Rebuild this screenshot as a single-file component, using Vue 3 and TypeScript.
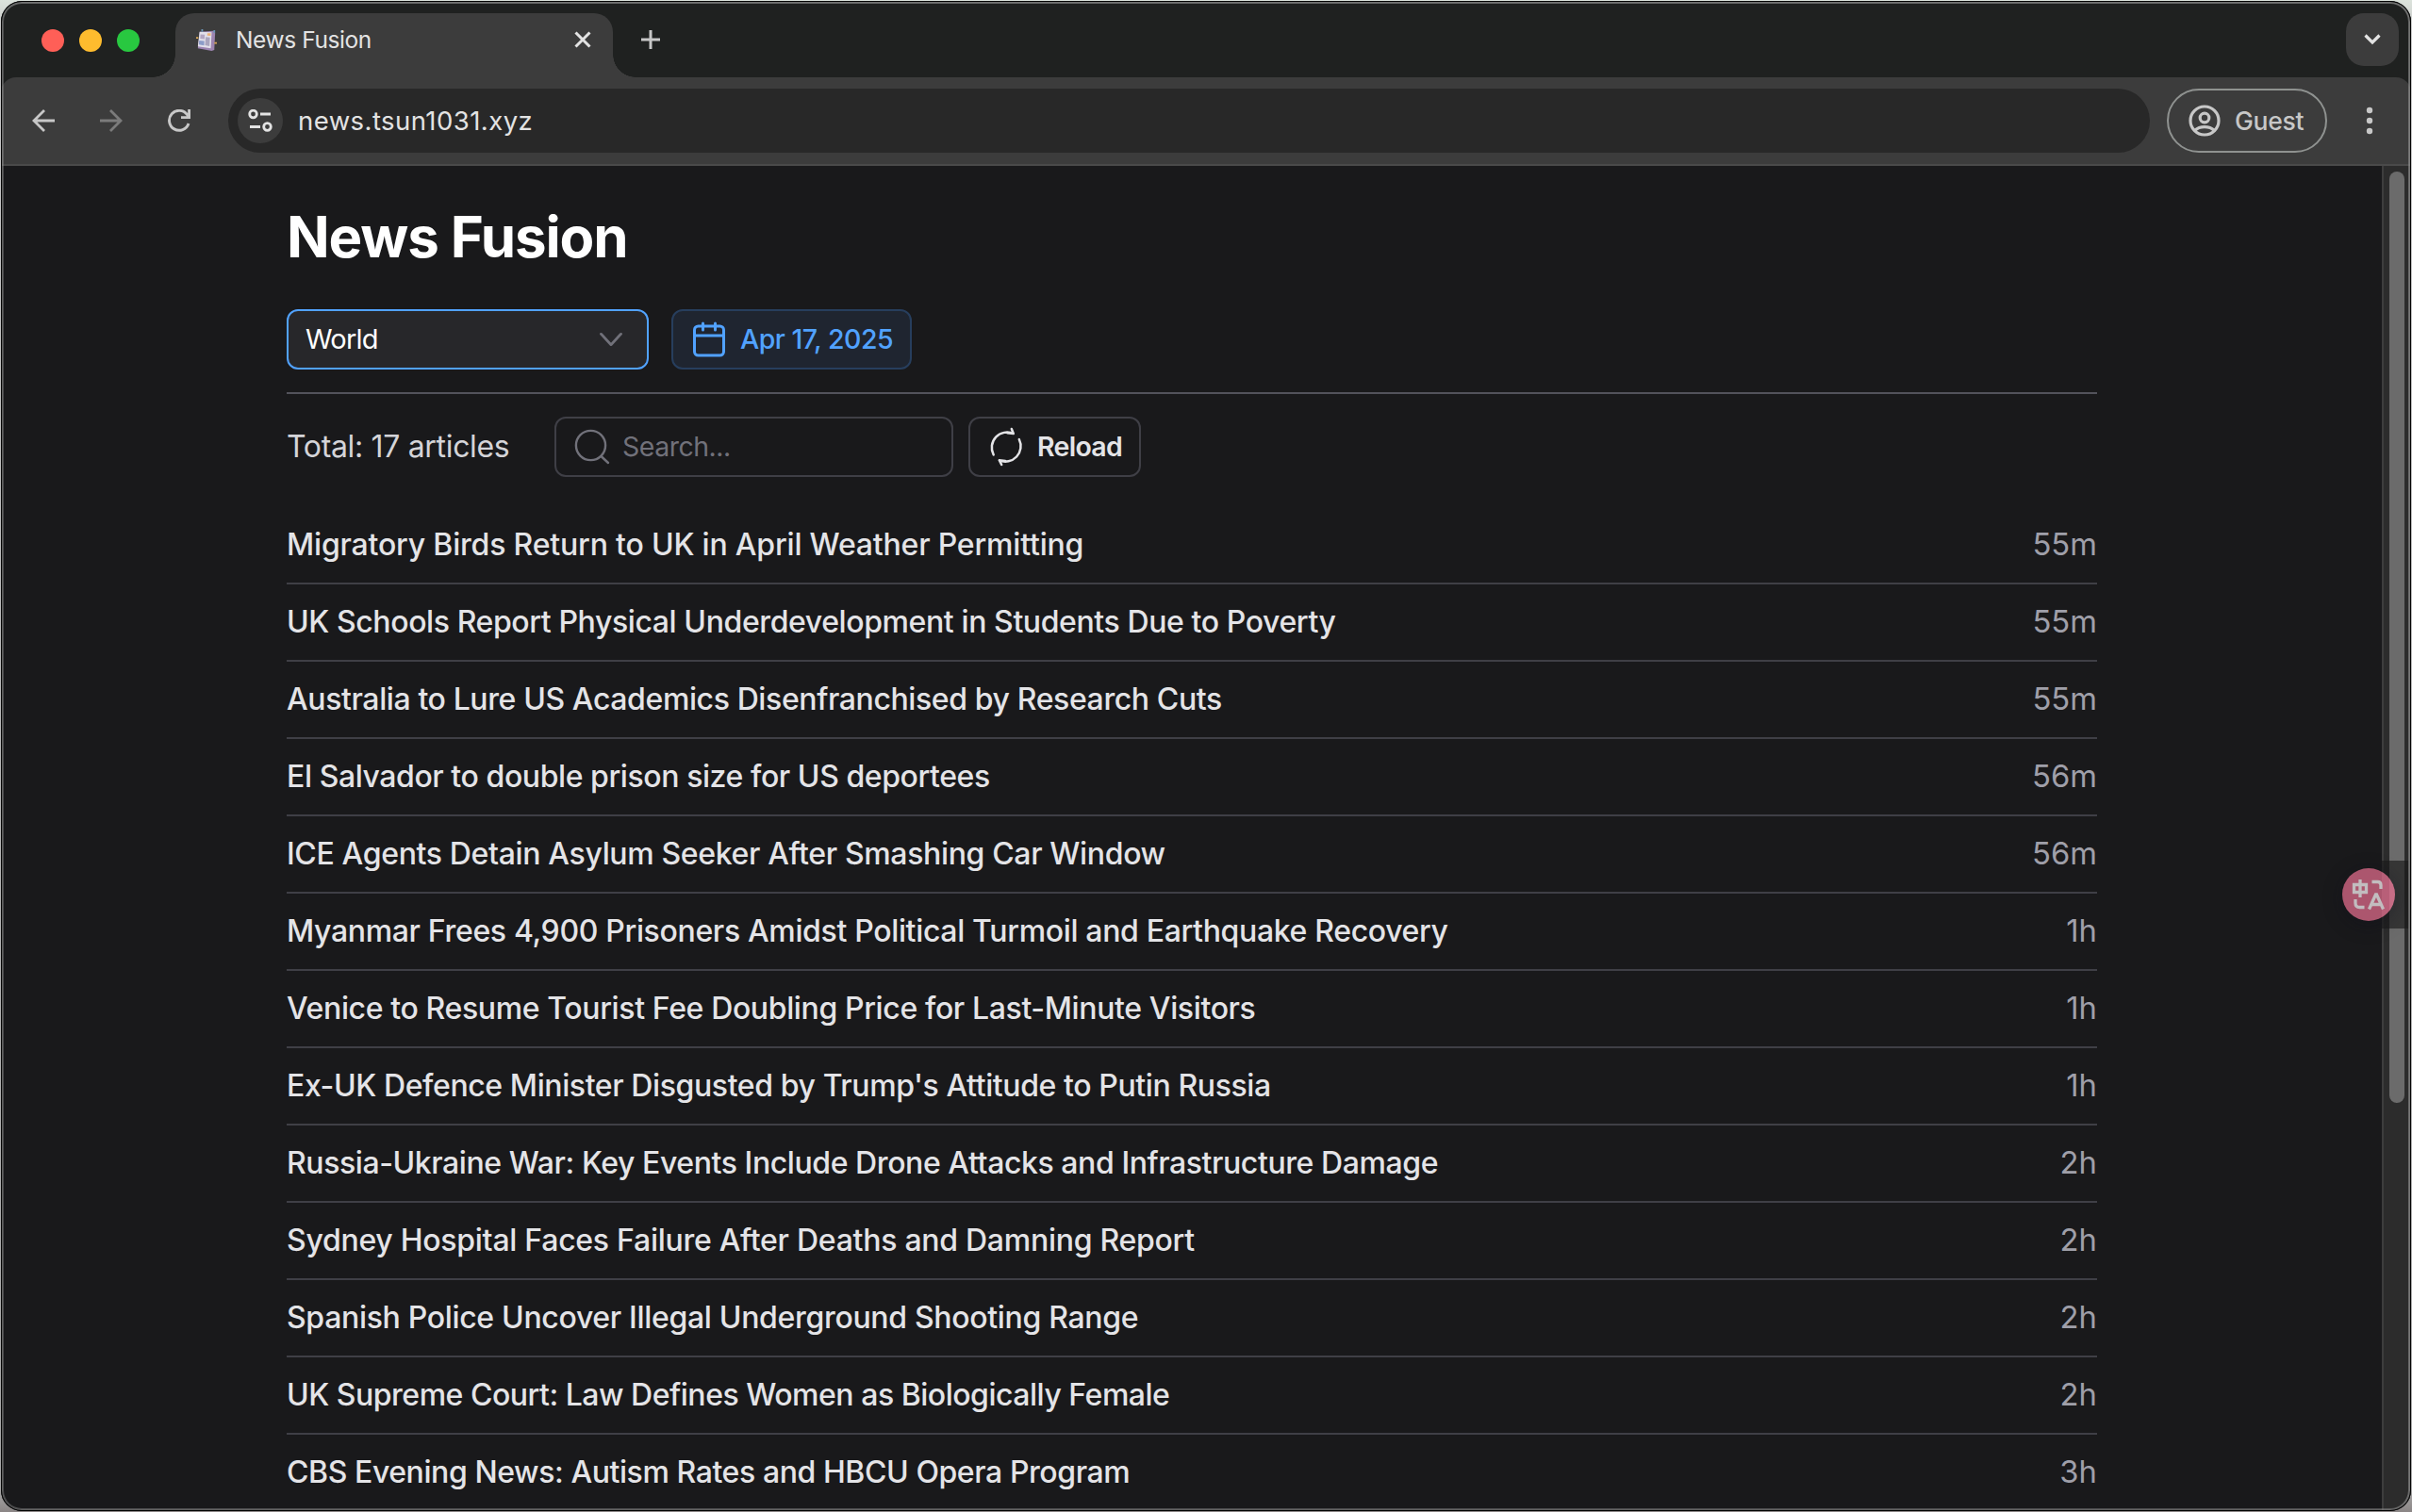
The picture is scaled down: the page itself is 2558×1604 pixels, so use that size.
<script setup lang="ts">
interface Article {
  title: string
  age: string
  tracking: number
}

const articles: Article[] = [
  { title: 'Migratory Birds Return to UK in April Weather Permitting', age: '55m', tracking: -0.19 },
  { title: 'UK Schools Report Physical Underdevelopment in Students Due to Poverty', age: '55m', tracking: -0.4 },
  { title: 'Australia to Lure US Academics Disenfranchised by Research Cuts', age: '55m', tracking: -0.39 },
  { title: 'El Salvador to double prison size for US deportees', age: '56m', tracking: -0.42 },
  { title: 'ICE Agents Detain Asylum Seeker After Smashing Car Window', age: '56m', tracking: -0.35 },
  { title: 'Myanmar Frees 4,900 Prisoners Amidst Political Turmoil and Earthquake Recovery', age: '1h', tracking: -0.34 },
  { title: 'Venice to Resume Tourist Fee Doubling Price for Last-Minute Visitors', age: '1h', tracking: -0.37 },
  { title: "Ex-UK Defence Minister Disgusted by Trump's Attitude to Putin Russia", age: '1h', tracking: -0.4 },
  { title: 'Russia-Ukraine War: Key Events Include Drone Attacks and Infrastructure Damage', age: '2h', tracking: -0.42 },
  { title: 'Sydney Hospital Faces Failure After Deaths and Damning Report', age: '2h', tracking: -0.27 },
  { title: 'Spanish Police Uncover Illegal Underground Shooting Range', age: '2h', tracking: -0.32 },
  { title: 'UK Supreme Court: Law Defines Women as Biologically Female', age: '2h', tracking: -0.48 },
  { title: 'CBS Evening News: Autism Rates and HBCU Opera Program', age: '3h', tracking: -0.42 },
]
</script>

<template>
  <div class="desktop">
    <div class="window">
      <header class="tabstrip">
        <div class="lights"><i class="red"></i><i class="yellow"></i><i class="green"></i></div>
        <div class="tab">
          <svg class="favicon" width="22" height="24" viewBox="0 0 24 26">
            <path d="M4 4l16-1 2 2-1 20-3 1-16-3z" fill="#9c84b0" />
            <path d="M4 4l14 .5-1 18.500-15-2z" fill="#e2dfea" />
            <path d="M5 7l5 .4-.3 5-5-.5z" fill="#b3a6c2" />
            <path d="M3.500 14l6 .7-.3 5-6-1z" fill="#8c9cc8" />
            <path d="M11 10l5 .6-.6 10-5-1z" fill="#aaa5be" />
            <path d="M13 5.500l4 .2-.2 3-4-.3z" fill="#ecb376" />
            <path d="M7 1v3M21 2v3" stroke="#6d95b6" stroke-width="2" />
            <path d="M0 11h2.500M21 17h3" stroke="#d8a557" stroke-width="2" />
          </svg>
          <span class="tab-title">News Fusion</span>
          <svg class="tab-close" width="18" height="18" viewBox="0 0 18 18"><path d="M1.500 1.500l15 15M16.500 1.500l-15 15" stroke="#e3e3e3" stroke-width="3" /></svg>
        </div>
        <svg class="plus" width="20" height="20" viewBox="0 0 20 20"><path d="M10 0v20M0 10h20" stroke="#c7c7c7" stroke-width="3" /></svg>
        <div class="tab-search">
          <svg width="18" height="12" viewBox="0 0 18 12"><path d="M1.500 1.500L9 9l7.500-7.500" fill="none" stroke="#e3e3e3" stroke-width="3.200" /></svg>
        </div>
      </header>

      <div class="toolbar">
        <svg class="nav" width="24" height="24" viewBox="0 0 24 24"><path d="M24 12H2M13 1L2 12l11 11" fill="none" stroke="#c7c7c7" stroke-width="2.800" /></svg>
        <svg class="nav" width="24" height="24" viewBox="0 0 24 24"><path d="M0 12h22M11 1l11 11-11 11" fill="none" stroke="#7b7b7b" stroke-width="2.800" /></svg>
        <svg class="nav" width="24" height="24" viewBox="0 0 24 24"><path d="M22 15A10.500 10.500 0 1 1 20.500 5.600L22 8M22.600 0v8.600H14" fill="none" stroke="#c7c7c7" stroke-width="2.900" /></svg>
        <div class="omnibox">
          <span class="site-info">
            <svg width="26" height="24" viewBox="0 0 26 24">
              <g fill="none" stroke="#e3e3e3" stroke-width="2.800"><circle cx="5.500" cy="5" r="3.800" /><path d="M13 5h11M2 18.500h11" /><circle cx="20.500" cy="18.500" r="3.800" /></g>
            </svg>
          </span>
          <span class="url">news.tsun1031.xyz</span>
        </div>
        <div class="guest">
          <svg width="34" height="34" viewBox="0 0 34 34"><g fill="none" stroke="#c7c7c7" stroke-width="3.200"><circle cx="17" cy="17" r="15" /><circle cx="17" cy="14" r="4.800" /><path d="M6.500 27.500C12 22.400 22 22.400 27.500 27.500" /></g></svg>
          <span>Guest</span>
        </div>
        <svg class="dots" width="8" height="30" viewBox="0 0 8 30"><g fill="#c7c7c7"><circle cx="4" cy="4" r="3.200" /><circle cx="4" cy="15" r="3.200" /><circle cx="4" cy="26" r="3.200" /></g></svg>
      </div>

      <div class="viewport">
        <main class="page">
          <h1>News Fusion</h1>
          <div class="filters">
            <div class="select">
              <span>World</span>
              <svg width="24" height="18" viewBox="0 0 24 18"><path d="M1.500 1.500L12 16 22.500 1.500" transform="translate(0 2) scale(1 .8)" fill="none" stroke="#71717a" stroke-width="3" stroke-linecap="round" stroke-linejoin="round" /></svg>
            </div>
            <div class="date">
              <svg width="34" height="38" viewBox="0 0 34 38"><g fill="none" stroke="#51a2ff" stroke-width="3" stroke-linecap="round"><rect x="1.500" y="5" width="31" height="31" rx="4" /><path d="M2 15h30M10.500 2v7M23.500 2v7" /></g></svg>
              <span>Apr 17, 2025</span>
            </div>
          </div>
          <div class="tools">
            <span class="total">Total: 17 articles</span>
            <div class="search">
              <svg width="38" height="38" viewBox="0 0 38 38"><g fill="none" stroke="#71717a" stroke-width="2.400" stroke-linecap="round"><circle cx="17.500" cy="17.500" r="15.600" /><path d="M28.500 29l7.500 7" /></g></svg>
              <span>Search...</span>
            </div>
            <div class="reload">
              <svg width="36" height="42" viewBox="0 0 36 42"><g fill="none" stroke="#e4e4e7" stroke-width="2.500" stroke-linecap="round" stroke-linejoin="round"><path d="M4.700 29.500A16.300 16.300 0 0 1 25.800 7M23.800 2l2 5-6.500-.8" /><path d="M31.800 13A16.300 16.300 0 0 1 10.800 35.300M13.200 40l-2.400-4.700 6.500.7" /></g></svg>
              <span>Reload</span>
            </div>
          </div>
          <ul class="list">
            <li v-for="a in articles" :key="a.title">
              <span class="title" :style="{ letterSpacing: a.tracking + 'px' }">{{ a.title }}</span>
              <span class="age">{{ a.age }}</span>
            </li>
          </ul>
        </main>
        <div class="scrollbar"><div class="thumb"></div></div>
      </div>
      <div class="translate-strip"></div>
      <div class="translate">
        <svg width="36" height="34" viewBox="0 0 36 34"><g fill="none" stroke="#c2bdbf" stroke-width="3.300"><path d="M2.500 6.500h13v8h-13zM9 1v19M21.500 3.500h6q3.500 0 3.500 3.500v4M4 22v4q0 4.500 4.500 4.500h5M18.500 32.500L25.500 17h1l7 15.500M21.500 27.500h9.500" /></g></svg>
      </div>
      <div class="frame"></div>
    </div>
  </div>
</template>

<style>
body { margin: 0; overflow: hidden; background: #c4c6c4; }
</style>

<style scoped>
* { box-sizing: border-box; }
svg { display: block; flex: none; }
.desktop {
  width: 2558px; height: 1604px; padding: 1px; overflow: hidden;
  background: linear-gradient(#dce3dc 0, #c9c9c9 30px, #a9a9a9 1580px, #8b8585 100%);
  font-family: Inter, "Liberation Sans", sans-serif;
}
.window {
  position: relative; display: flex; flex-direction: column;
  width: 2556px; height: 1602px; border-radius: 22px; overflow: hidden; background: #1f2120;
}
.frame {
  position: absolute; inset: 0; border-radius: 22px; border: 1px solid #050505;
  box-shadow: inset 0 0 0 2px rgba(150, 150, 150, 0.4), inset 0 1px 0 1px rgba(150, 150, 150, 0.3), inset -1px 0 0 1px rgba(150, 150, 150, 0.3);
}
.tabstrip { display: flex; flex: none; height: 81px; padding: 13px 13px 0 43px; background: #1f2120; }
.lights { display: flex; gap: 16px; padding-top: 17px; width: 142px; }
.lights i { width: 24px; height: 24px; border-radius: 50%; }
.red { background: #ff5f57; }
.yellow { background: #febc2e; }
.green { background: #28c840; }
.tab {
  position: relative; display: flex; width: 464px; height: 68px; padding: 0 23px 12px 22px; align-items: center;
  border-radius: 20px 20px 0 0; background: #3c3c3c;
}
.tab::before, .tab::after { content: ""; position: absolute; bottom: 0; width: 24px; height: 24px; }
.tab::before { left: -24px; background: radial-gradient(circle at 0 0, transparent 23.500px, #3c3c3c 24px); }
.tab::after { right: -24px; background: radial-gradient(circle at 100% 0, transparent 23.500px, #3c3c3c 24px); }
.favicon { margin-right: 20px; }
.tab-title { flex: 1; padding-bottom: 1px; font-size: 24.500px; letter-spacing: -0.400px; color: #e3e3e3; }
.plus { margin: 18px 0 0 30px; }
.tab-search {
  display: flex; width: 56px; height: 56px; margin-left: auto; align-items: center; justify-content: center;
  border-radius: 19px; background: #3c3c3c;
}
.toolbar {
  display: flex; flex: none; align-items: center; height: 94px; padding: 0 40px 0 33px;
  border-bottom: 2px solid #4a4a4a; border-radius: 16px 16px 0 0; background: #3c3c3c;
}
.nav { margin-right: 48px; }
.omnibox {
  display: flex; align-items: center; width: 2038px; height: 68px; margin-left: -8px; padding-left: 10px;
  border-radius: 34px; background: #282828;
}
.site-info {
  display: flex; align-items: center; justify-content: center; width: 48px; height: 48px; margin-right: 16px;
  border-radius: 50%; background: #3c3c3c;
}
.url { font-size: 27.500px; letter-spacing: 0.440px; color: #e3e3e3; }
.guest {
  display: flex; align-items: center; gap: 15px; width: 170px; height: 68px; margin-left: 18px; padding-left: 21px;
  border: 2px solid #8f9290; border-radius: 34px; font-size: 26.500px; font-weight: 500; letter-spacing: -0.300px; color: #c7c7c7;
}
.dots { margin-left: auto; }
.viewport { display: flex; flex: 1; min-height: 0; overflow: hidden; background: #19191b; }
.page { width: 1920px; margin-left: 303px; color: #e4e4e7; }
h1 { margin: 37px 0 0; font-size: 60px; line-height: 76px; font-weight: 700; letter-spacing: -1.150px; color: #fff; }
.filters { display: flex; gap: 24px; margin-top: 39px; padding-bottom: 24px; border-bottom: 2px solid #52525b; }
.select {
  display: flex; align-items: center; justify-content: space-between; width: 384px; height: 64px; padding: 0 26px 0 18px;
  border: 2px solid #51a2ff; border-radius: 12px; background: #27272a; font-size: 29px; letter-spacing: -0.800px; color: #fff;
}
.select span, .date span, .total, .search span, .reload span { padding-bottom: 1px; }
.date {
  display: flex; align-items: center; gap: 16px; width: 255px; height: 64px; padding-left: 21px;
  border: 2px solid #273e5d; border-radius: 12px; background: #1f2530; font-size: 28.500px; font-weight: 500; letter-spacing: -0.500px; color: #51a2ff; white-space: nowrap;
}
.tools { display: flex; align-items: center; margin-top: 24px; }
.total { width: 284px; font-size: 32px; letter-spacing: -0.330px; color: #d4d4d8; white-space: nowrap; }
.search {
  display: flex; align-items: center; gap: 13px; width: 423px; height: 64px; padding-left: 19px;
  border: 2px solid #3f3f46; border-radius: 12px; font-size: 28.500px; letter-spacing: -0.500px; color: #71717a;
}
.reload {
  display: flex; align-items: center; gap: 15px; width: 183px; height: 64px; margin-left: 16px; padding-left: 20px;
  border: 2px solid #3f3f46; border-radius: 12px; font-size: 28.500px; font-weight: 600; letter-spacing: -0.700px; color: #e4e4e7;
}
.list { margin: 32px 0 0; padding: 0; list-style: none; }
li {
  display: flex; align-items: center; justify-content: space-between; height: 82px; padding-bottom: 2px;
  border-bottom: 2px solid #3f3f46; font-size: 32px; white-space: nowrap;
}
.title { font-weight: 500; }
.age { font-size: 32.800px; color: #9f9fa9; }
.scrollbar { width: 31px; margin-left: auto; padding: 6px 0 0 6px; border-left: 2px solid #3d3d3d; background: #2c2c2c; }
.thumb { width: 16px; height: 988px; border-radius: 8px; background: #6b6b6b; }
.translate-strip { position: absolute; right: 0; top: 912px; width: 31px; height: 72px; background: rgba(26, 26, 26, 0.650); }
.translate {
  position: absolute; left: 2483px; top: 920px; display: flex; align-items: center; justify-content: center; width: 56px; height: 56px;
  border-radius: 50%; background: linear-gradient(90deg, #ac566e 42px, #b85f78 42px, #b85f78 50px, #c76d86 50px);
  box-shadow: 0 4px 20px rgba(15, 15, 30, 0.350);
}
</style>
